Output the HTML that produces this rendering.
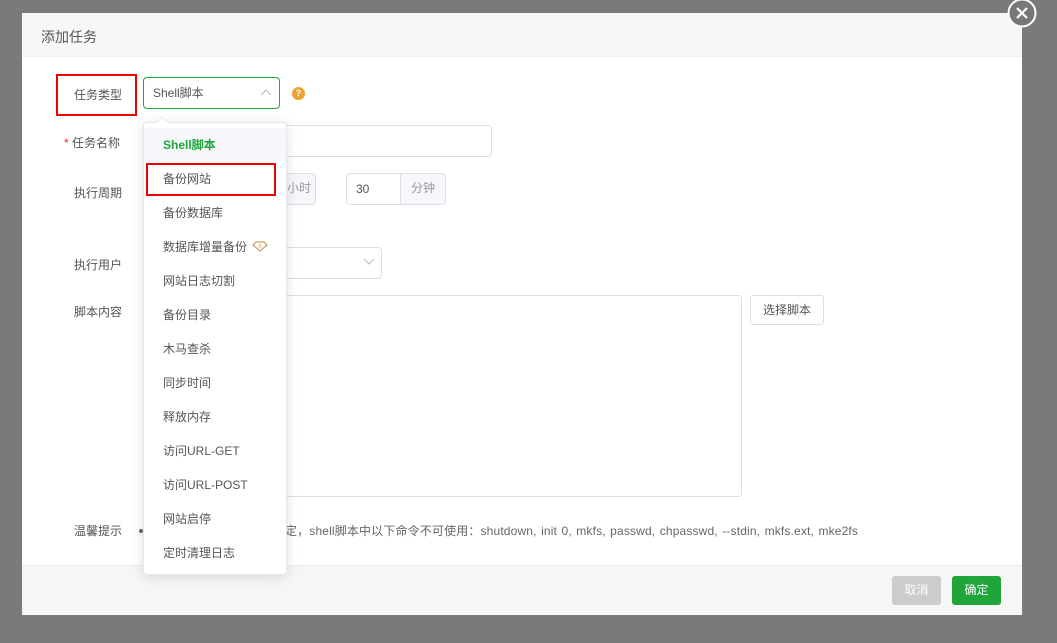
<!DOCTYPE html>
<html><head><meta charset="utf-8"><style>
*{box-sizing:border-box;margin:0;padding:0}
body{width:1057px;height:643px;background:#7a7a7a;font-family:"Liberation Sans","Noto Sans CJK SC",sans-serif;font-size:12px;color:#666;position:relative;overflow:hidden}
.a{position:absolute}
.modal{left:22px;top:13px;width:1000px;height:602px;background:#fff;border-radius:2px}
.hdr{left:22px;top:13px;width:1000px;height:44px;background:#f7f7f7;border-bottom:1px solid #eee}
.ftr{left:22px;top:565px;width:1000px;height:50px;background:#f5f6f6;border-top:1px solid #eee}
.lbl{font-size:12px;color:#555}
.box{border:1px solid #dcdfe6;border-radius:4px;background:#fff}
.addon{background:#f5f7fa;color:#999;text-align:center;line-height:29px;border:1px solid #dcdfe6}
.dd{left:143px;top:122px;width:144px;height:453px;background:#fff;border:1px solid #e4e7ed;border-radius:4px;box-shadow:0 2px 12px rgba(0,0,0,.12)}
.it{position:absolute;left:0;width:142px;height:34px;line-height:34px;padding-left:19px;font-size:12px;color:#555}
.btn{border-radius:3px;color:#fff;text-align:center;line-height:29px;font-size:12px;width:49px;height:29px}
</style></head><body>
<div class="a modal"></div>
<div class="a hdr"></div>
<div class="a" style="left:41px;top:27px;font-size:14px;color:#555">添加任务</div>
<div class="a ftr"></div>

<div class="a" style="left:56px;top:74px;width:81px;height:42px;border:2px solid #e00"></div>
<div class="a lbl" style="left:74px;top:86px">任务类型</div>
<div class="a" style="left:143px;top:77px;width:137px;height:32px;border:1px solid #20a53a;border-radius:4px;padding-left:9px;line-height:30px;color:#555">Shell脚本</div>
<svg class="a" style="left:260px;top:88px" width="12" height="8"><path d="M1 7L6 2L11 7" stroke="#bbb" fill="none"/></svg>
<div class="a" style="left:292px;top:87px;width:13px;height:13px;border-radius:50%;background:#f0a030;color:#fff;font-size:9px;font-weight:bold;text-align:center;line-height:13px">?</div>

<div class="a lbl" style="left:64px;top:134px"><span style="color:#e33">*</span> 任务名称</div>
<div class="a box" style="left:280px;top:125px;width:212px;height:32px"></div>

<div class="a lbl" style="left:74px;top:184px">执行周期</div>
<div class="a addon" style="left:282px;top:173px;width:34px;height:32px;border-radius:0 4px 4px 0">小时</div>
<div class="a box" style="left:346px;top:173px;width:100px;height:32px;line-height:30px;padding-left:9px;color:#555">30</div>
<div class="a addon" style="left:400px;top:173px;width:46px;height:32px;border-radius:0 4px 4px 0">分钟</div>

<div class="a lbl" style="left:74px;top:256px">执行用户</div>
<div class="a box" style="left:280px;top:247px;width:102px;height:32px"></div>
<svg class="a" style="left:363px;top:258px" width="12" height="8"><path d="M1 1L6 6L11 1" stroke="#bbb" fill="none"/></svg>

<div class="a lbl" style="left:74px;top:303px">脚本内容</div>
<div class="a box" style="left:280px;top:295px;width:462px;height:202px;border-radius:3px"></div>
<div class="a box" style="left:750px;top:295px;width:74px;height:30px;line-height:28px;text-align:center;color:#555;border-radius:3px">选择脚本</div>

<div class="a lbl" style="left:74px;top:522px">温馨提示</div>
<div class="a" style="left:139px;top:529px;width:4px;height:4px;border-radius:50%;background:#666"></div>
<div class="a" style="left:285px;top:522px;color:#666;letter-spacing:0.15px;word-spacing:1px">定，shell脚本中以下命令不可使用：shutdown, init 0, mkfs, passwd, chpasswd, --stdin, mkfs.ext, mke2fs</div>

<div class="a btn" style="left:892px;top:576px;background:#ccc">取消</div>
<div class="a btn" style="left:952px;top:576px;background:#20a53a">确定</div>

<div class="a dd">
<div class="it" style="top:5px;background:#f5f7fa;color:#20a53a;font-weight:bold">Shell脚本</div>
<div class="it" style="top:39px">备份网站</div>
<div class="it" style="top:73px">备份数据库</div>
<div class="it" style="top:107px">数据库增量备份 <svg width="16" height="12" style="vertical-align:-1px;margin-left:2px"><path d="M4 2H12L15 5L8 11L1 5Z" fill="none" stroke="#c9a060" stroke-width="1.2"/><text x="8" y="8" font-size="6" fill="#c9a060" text-anchor="middle">♔</text></svg></div>
<div class="it" style="top:141px">网站日志切割</div>
<div class="it" style="top:175px">备份目录</div>
<div class="it" style="top:209px">木马查杀</div>
<div class="it" style="top:243px">同步时间</div>
<div class="it" style="top:277px">释放内存</div>
<div class="it" style="top:311px">访问URL-GET</div>
<div class="it" style="top:345px">访问URL-POST</div>
<div class="it" style="top:379px">网站启停</div>
<div class="it" style="top:413px">定时清理日志</div>
</div>
<div class="a" style="left:158px;top:118px;width:8px;height:8px;background:#fff;border-left:1px solid #e4e7ed;border-top:1px solid #e4e7ed;transform:rotate(45deg)"></div>
<div class="a" style="left:146px;top:163px;width:130px;height:33px;border:2px solid #e00"></div>

<svg class="a" style="left:1006px;top:-3px" width="32" height="32"><circle cx="16" cy="16" r="13.5" fill="#777" stroke="#fff" stroke-width="2"/><path d="M11 11L21 21M21 11L11 21" stroke="#fff" stroke-width="2.2"/></svg>
</body></html>
